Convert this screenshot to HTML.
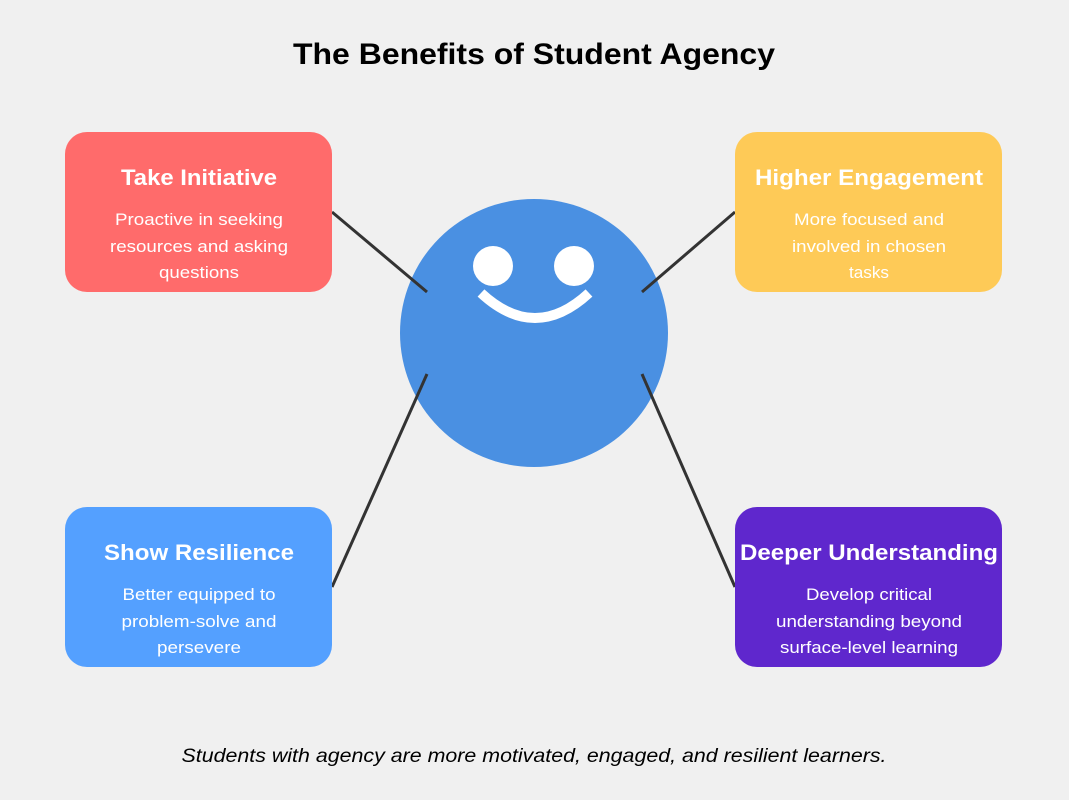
<!DOCTYPE html>
<html><head><style>
body{margin:0;background:#f0f0f0;}
svg{display:block;font-family:"Liberation Sans",Arial,sans-serif;}
</style></head><body>
<svg width="1069" height="800" viewBox="0 0 1069 800">
<rect width="1069" height="800" fill="#f0f0f0"/>
<text x="534" y="64" text-anchor="middle" font-size="30" font-weight="bold" fill="#000" textLength="482" lengthAdjust="spacingAndGlyphs">The Benefits of Student Agency</text>
<circle cx="534" cy="333" r="134" fill="#4a90e2"/>
<g stroke="#333" stroke-width="3">
<line x1="332" y1="212" x2="427" y2="292"/>
<line x1="735" y1="212" x2="642" y2="292"/>
<line x1="427" y1="374" x2="332" y2="587"/>
<line x1="642" y1="374" x2="735" y2="587"/>
</g>
<circle cx="493" cy="266" r="20" fill="#fff"/>
<circle cx="574" cy="266" r="20" fill="#fff"/>
<path d="M481 293 Q535 343 589 293" stroke="#fff" stroke-width="10" fill="none"/>
<rect x="65" y="132" width="267" height="160" rx="22" fill="#ff6b6b"/>
<rect x="735" y="132" width="267" height="160" rx="22" fill="#feca57"/>
<rect x="65" y="507" width="267" height="160" rx="22" fill="#54a0ff"/>
<rect x="735" y="507" width="267" height="160" rx="22" fill="#5f27cd"/>
<g fill="#fff" text-anchor="middle" lengthAdjust="spacingAndGlyphs">
<text x="199" y="185" font-size="22" font-weight="bold" textLength="156" lengthAdjust="spacingAndGlyphs">Take Initiative</text>
<text x="199" y="225" font-size="17" textLength="168" lengthAdjust="spacingAndGlyphs">Proactive in seeking</text>
<text x="199" y="252" font-size="17" textLength="178" lengthAdjust="spacingAndGlyphs">resources and asking</text>
<text x="199" y="278" font-size="17" textLength="80" lengthAdjust="spacingAndGlyphs">questions</text>
<text x="869" y="185" font-size="22" font-weight="bold" textLength="228" lengthAdjust="spacingAndGlyphs">Higher Engagement</text>
<text x="869" y="225" font-size="17" textLength="150" lengthAdjust="spacingAndGlyphs">More focused and</text>
<text x="869" y="252" font-size="17" textLength="154" lengthAdjust="spacingAndGlyphs">involved in chosen</text>
<text x="869" y="278" font-size="17" textLength="40" lengthAdjust="spacingAndGlyphs">tasks</text>
<text x="199" y="560" font-size="22" font-weight="bold" textLength="190" lengthAdjust="spacingAndGlyphs">Show Resilience</text>
<text x="199" y="600" font-size="17" textLength="153" lengthAdjust="spacingAndGlyphs">Better equipped to</text>
<text x="199" y="627" font-size="17" textLength="155" lengthAdjust="spacingAndGlyphs">problem-solve and</text>
<text x="199" y="653" font-size="17" textLength="84" lengthAdjust="spacingAndGlyphs">persevere</text>
<text x="869" y="560" font-size="22" font-weight="bold" textLength="258" lengthAdjust="spacingAndGlyphs">Deeper Understanding</text>
<text x="869" y="600" font-size="17" textLength="126" lengthAdjust="spacingAndGlyphs">Develop critical</text>
<text x="869" y="627" font-size="17" textLength="186" lengthAdjust="spacingAndGlyphs">understanding beyond</text>
<text x="869" y="653" font-size="17" textLength="178" lengthAdjust="spacingAndGlyphs">surface-level learning</text>
</g>
<text x="534" y="762" text-anchor="middle" font-size="19" font-style="italic" fill="#000" textLength="705" lengthAdjust="spacingAndGlyphs">Students with agency are more motivated, engaged, and resilient learners.</text>
</svg>
</body></html>
